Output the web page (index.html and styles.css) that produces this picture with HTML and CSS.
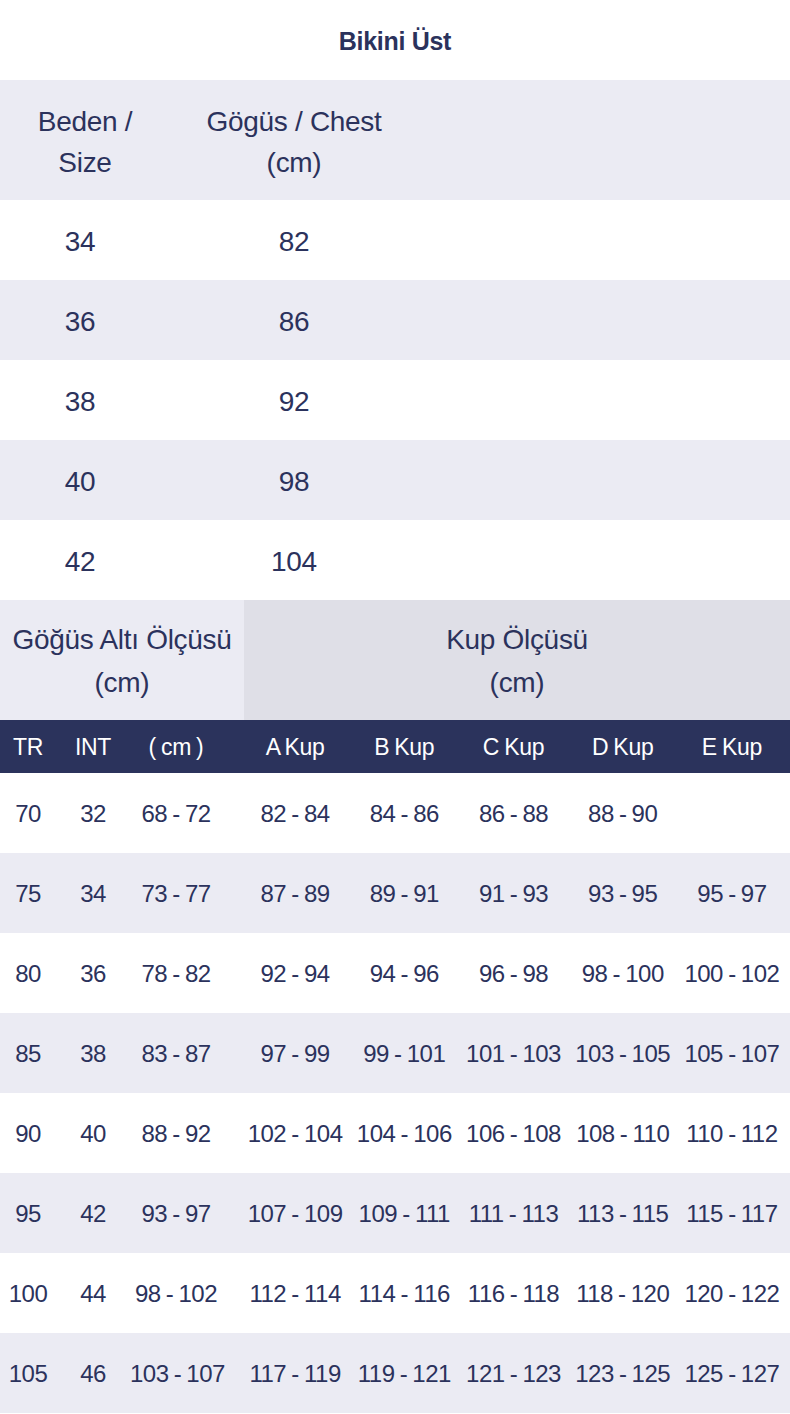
FILE: index.html
```html
<!DOCTYPE html>
<html lang="tr">
<head>
<meta charset="utf-8">
<title>Bikini Üst</title>
<link rel="stylesheet" href="styles.css">
</head>
<body>
<div class="page">
  <h1 class="title">Bikini Üst</h1>

  <div class="size-table">
    <div class="srow head">
      <div class="s1 s1-head">Beden /<br>Size</div>
      <div class="s2">Gögüs / Chest<br>(cm)</div>
    </div>
    <div class="srow"><div class="s1">34</div><div class="s2">82</div></div>
    <div class="srow alt"><div class="s1">36</div><div class="s2">86</div></div>
    <div class="srow"><div class="s1">38</div><div class="s2">92</div></div>
    <div class="srow alt"><div class="s1">40</div><div class="s2">98</div></div>
    <div class="srow"><div class="s1">42</div><div class="s2">104</div></div>
  </div>

  <div class="cup-table">
    <div class="group-head">
      <div class="g1">Göğüs Altı Ölçüsü<br>(cm)</div>
      <div class="g2">Kup Ölçüsü<br>(cm)</div>
    </div>
    <div class="crow chead">
      <div class="cell">TR</div><div class="cell">INT</div><div class="cell cm">( cm )</div>
      <div class="cell kup">A Kup</div><div class="cell kup">B Kup</div><div class="cell kup">C Kup</div><div class="cell kup">D Kup</div><div class="cell kup">E Kup</div>
    </div>
    <div class="crow">
      <div class="cell">70</div><div class="cell">32</div><div class="cell cm">68 - 72</div>
      <div class="cell kup">82 - 84</div><div class="cell kup">84 - 86</div><div class="cell kup">86 - 88</div><div class="cell kup">88 - 90</div><div class="cell kup"></div>
    </div>
    <div class="crow alt">
      <div class="cell">75</div><div class="cell">34</div><div class="cell cm">73 - 77</div>
      <div class="cell kup">87 - 89</div><div class="cell kup">89 - 91</div><div class="cell kup">91 - 93</div><div class="cell kup">93 - 95</div><div class="cell kup">95 - 97</div>
    </div>
    <div class="crow">
      <div class="cell">80</div><div class="cell">36</div><div class="cell cm">78 - 82</div>
      <div class="cell kup">92 - 94</div><div class="cell kup">94 - 96</div><div class="cell kup">96 - 98</div><div class="cell kup">98 - 100</div><div class="cell kup">100 - 102</div>
    </div>
    <div class="crow alt">
      <div class="cell">85</div><div class="cell">38</div><div class="cell cm">83 - 87</div>
      <div class="cell kup">97 - 99</div><div class="cell kup">99 - 101</div><div class="cell kup">101 - 103</div><div class="cell kup">103 - 105</div><div class="cell kup">105 - 107</div>
    </div>
    <div class="crow">
      <div class="cell">90</div><div class="cell">40</div><div class="cell cm">88 - 92</div>
      <div class="cell kup">102 - 104</div><div class="cell kup">104 - 106</div><div class="cell kup">106 - 108</div><div class="cell kup">108 - 110</div><div class="cell kup">110 - 112</div>
    </div>
    <div class="crow alt">
      <div class="cell">95</div><div class="cell">42</div><div class="cell cm">93 - 97</div>
      <div class="cell kup">107 - 109</div><div class="cell kup">109 - 111</div><div class="cell kup">111 - 113</div><div class="cell kup">113 - 115</div><div class="cell kup">115 - 117</div>
    </div>
    <div class="crow">
      <div class="cell">100</div><div class="cell">44</div><div class="cell cm">98 - 102</div>
      <div class="cell kup">112 - 114</div><div class="cell kup">114 - 116</div><div class="cell kup">116 - 118</div><div class="cell kup">118 - 120</div><div class="cell kup">120 - 122</div>
    </div>
    <div class="crow alt">
      <div class="cell">105</div><div class="cell">46</div><div class="cell cm">103 - 107</div>
      <div class="cell kup">117 - 119</div><div class="cell kup">119 - 121</div><div class="cell kup">121 - 123</div><div class="cell kup">123 - 125</div><div class="cell kup">125 - 127</div>
    </div>
  </div>
</div>
</body>
</html>
```

FILE: styles.css
```css
* { box-sizing: border-box; }

body {
  margin: 0;
  background: #ffffff;
  font-family: "Liberation Sans", Arial, sans-serif;
  color: #2b325c;
}

.page {
  width: 790px;
}

.title {
  margin: 0;
  height: 80px;
  display: flex;
  align-items: center;
  justify-content: center;
  font-size: 25px;
  font-weight: 700;
  letter-spacing: -0.3px;
  padding-top: 2px;
}

/* first table */
.srow {
  display: grid;
  grid-template-columns: 160px 268px 1fr;
  height: 80px;
  align-items: center;
  text-align: center;
  font-size: 28px;
  letter-spacing: -0.3px;
  background: #ffffff;
  padding-top: 3px;
}

.srow.alt { background: #ebebf3; }

.srow.head {
  height: 120px;
  background: #ebebf3;
  line-height: 41px;
  padding-top: 4px;
}

.s1-head { padding-left: 10px; }

/* second table */
.group-head {
  display: grid;
  grid-template-columns: 244px 1fr;
  height: 120px;
  font-size: 28px;
  letter-spacing: -0.3px;
  line-height: 43px;
  text-align: center;
}

.g1, .g2 {
  display: flex;
  align-items: center;
  justify-content: center;
  padding-top: 2px;
}

.g1 { background: #ebebf3; }
.g2 { background: #dfdfe7; }

.crow {
  display: grid;
  grid-template-columns: 56px 74px 114px repeat(5, 1fr);
  height: 80px;
  align-items: center;
  text-align: center;
  font-size: 24px;
  letter-spacing: -0.5px;
  word-spacing: -1px;
  white-space: nowrap;
  background: #ffffff;
  padding-top: 2px;
}

.crow.alt { background: #ebebf3; }

.crow.chead {
  height: 53px;
  background: #2b335c;
  color: #ffffff;
  font-size: 23px;
  letter-spacing: -0.3px;
  word-spacing: -1px;
  padding-top: 1px;
}

.cell.cm { padding-right: 22px; }
.cell.kup { padding-right: 7px; }
```
